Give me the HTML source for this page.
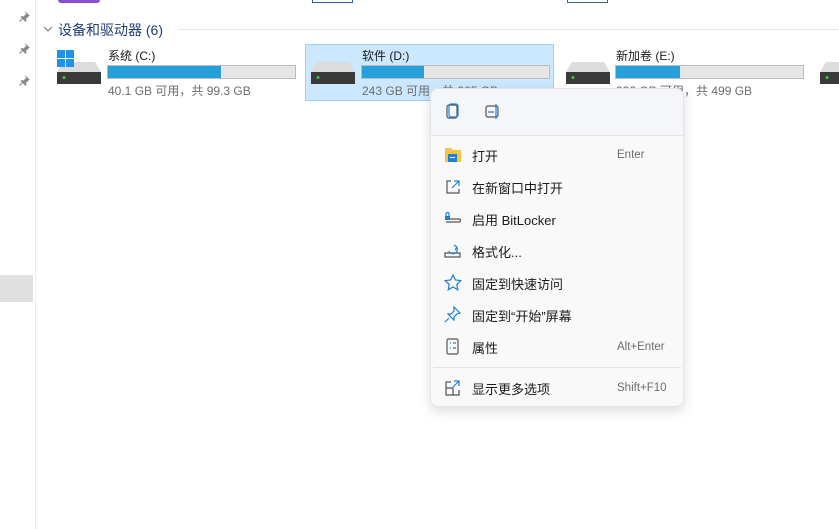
<!DOCTYPE html>
<html><head><meta charset="utf-8"><style>
*{margin:0;padding:0;box-sizing:border-box}
body{width:839px;height:529px;background:#fff;position:relative;overflow:hidden;font-family:"Liberation Sans","Noto Sans CJK SC",sans-serif;color:#1a1a1a}
.a{position:absolute}
.bar{position:absolute;height:14px;width:189px;background:#e6e6e6;border:1px solid #bcbcbc}
.bar i{display:block;height:12px;background:#26a0da}
.t{font-size:12px}
.s{font-size:12px;color:#6d6d6d}
.mi{position:absolute;left:472px;font-size:13px;color:#1a1a1a}
.sc{position:absolute;left:617px;font-size:11.5px;color:#6d6d6d}
</style></head><body>
<div class="a" style="left:35px;top:0;width:1px;height:529px;background:#ececec"></div>
<div class="a" style="left:0;top:275px;width:33px;height:27px;background:#e0e0e0"></div>
<svg class="a" style="left:18px;top:10px" width="14" height="80" fill="#8a8a8a"><g id="p"><path d="M7 1l5 5-1.5.5-2.5 2.5.5 2-1 1-5-5 1-1 2 .5 2.5-2.5z"/><path d="M4.5 8.5L1.5 11.5" stroke="#8a8a8a" stroke-width="1.2"/></g><use href="#p" y="32"/><use href="#p" y="64"/></svg>
<div class="a" style="left:58px;top:0;width:42px;height:3px;background:#8a4fd0;border-radius:0 0 3px 3px"></div>
<div class="a" style="left:312px;top:0;width:41px;height:3px;border:1px solid #2b5f99;border-top:none"></div>
<div class="a" style="left:567px;top:0;width:41px;height:3px;border:1px solid #2e6c78;border-top:none"></div>
<svg class="a" style="left:42px;top:23px" width="12" height="12"><path d="M2 4l4 4 4-4" stroke="#777" fill="none"/></svg>
<div class="a" style="left:58px;top:20px;font-size:14px;color:#1e3f73">设备和驱动器 (6)</div>
<div class="a" style="left:178px;top:29px;width:661px;height:1px;background:#e5e5e5"></div>
<div class="a" style="left:305px;top:44px;width:249px;height:57px;background:#cce8ff;border:1px solid #99d1ff"></div>
<svg class="a" style="left:57px;top:61px" width="44" height="24"><path d="M6 1h32l6 10H0z" fill="#dcdcdc"/><rect x="0" y="11" width="44" height="12" fill="#3a3a3a"/><circle cx="7" cy="16.5" r="1.5" fill="#3c3"/></svg>
<svg class="a" style="left:57px;top:50px" width="18" height="18"><rect x="0" y="0" width="8" height="8" fill="#1f93e8"/><rect x="9" y="0" width="8" height="8" fill="#1f93e8"/><rect x="0" y="9" width="8" height="8" fill="#1f93e8"/><rect x="9" y="9" width="8" height="8" fill="#1f93e8"/></svg>
<svg class="a" style="left:311px;top:61px" width="44" height="24"><path d="M6 1h32l6 10H0z" fill="#dcdcdc"/><rect x="0" y="11" width="44" height="12" fill="#3a3a3a"/><circle cx="7" cy="16.5" r="1.5" fill="#3c3"/></svg>
<svg class="a" style="left:566px;top:61px" width="44" height="24"><path d="M6 1h32l6 10H0z" fill="#dcdcdc"/><rect x="0" y="11" width="44" height="12" fill="#3a3a3a"/><circle cx="7" cy="16.5" r="1.5" fill="#3c3"/></svg>
<svg class="a" style="left:820px;top:61px" width="44" height="24"><path d="M6 1h32l6 10H0z" fill="#dcdcdc"/><rect x="0" y="11" width="44" height="12" fill="#3a3a3a"/><circle cx="7" cy="16.5" r="1.5" fill="#3c3"/></svg>
<div class="a t" style="left:108px;top:47px">系统 (C:)</div>
<div class="bar" style="left:107px;top:65px"><i style="width:113px"></i></div>
<div class="a s" style="left:108px;top:82px">40.1 GB 可用，共 99.3 GB</div>
<div class="a t" style="left:362px;top:47px">软件 (D:)</div>
<div class="bar" style="left:361px;top:65px"><i style="width:62px"></i></div>
<div class="a s" style="left:362px;top:82px">243 GB 可用，共 365 GB</div>
<div class="a t" style="left:616px;top:47px">新加卷 (E:)</div>
<div class="bar" style="left:615px;top:65px"><i style="width:64px"></i></div>
<div class="a s" style="left:616px;top:82px">232 GB 可用，共 499 GB</div>
<div class="a" style="left:430px;top:88px;width:254px;height:319px;background:#f9f9f9;border:1px solid #e4e4e4;border-radius:8px;box-shadow:0 4px 12px rgba(0,0,0,.14)"></div>
<div class="a" style="left:431px;top:89px;width:252px;height:46px;background:#f4f6f9;border-radius:8px 8px 0 0"></div>
<div class="a" style="left:431px;top:135px;width:252px;height:1px;background:#e3e3e3"></div>
<div class="a" style="left:433px;top:367px;width:248px;height:1px;background:#e3e3e3"></div>
<svg class="a" style="left:444px;top:102px" width="60" height="20" fill="none" stroke-width="1.2"><rect x="3" y="3" width="10" height="13" rx="2" stroke="#555"/><rect x="5" y="2" width="9" height="13" rx="2" stroke="#1f7ed8"/><rect x="42" y="4" width="12" height="11" rx="2" stroke="#555"/><path d="M44 10h6M52 2v15" stroke="#1f7ed8"/></svg>
<svg class="a" style="left:444px;top:146px" width="18" height="250" fill="none" stroke-width="1.2">
<path d="M1 2h6l2 2h8v12H1z" fill="#f6c445" stroke="none"/><rect x="4" y="8" width="9" height="8" fill="#1f7ed8"/><rect x="6" y="11" width="5" height="1" fill="#fff"/>
<g transform="translate(0,32)"><path d="M7 3H3v12h12v-4" stroke="#555"/><path d="M10 3h5v5M15 3l-7 7" stroke="#1f7ed8"/></g>
<g transform="translate(0,64)"><rect x="1" y="6" width="5" height="4" fill="#1f7ed8" stroke="none"/><path d="M2 6V4a1.5 1.5 0 013 0v2" stroke="#1f7ed8"/><path d="M6 9h9a1.5 1.5 0 010 3H2" stroke="#555"/></g>
<g transform="translate(0,96)"><path d="M1 11h15v4H1z" stroke="#555"/><path d="M5 9a4 4 0 108-3M10 3l3 2-2 3" stroke="#1f7ed8"/></g>
<g transform="translate(0,128)"><path d="M9 1l2.4 5 5.4.6-4 3.8 1 5.4L9 13l-4.8 2.8 1-5.4-4-3.8 5.4-.6z" stroke="#1f7ed8"/></g>
<g transform="translate(0,160)"><path d="M10 1l6 6-3 1-3 3 0 3-6-6 3 0 3-3zM5 12l-4 4" stroke="#1f7ed8"/></g>
<g transform="translate(0,192)"><rect x="3" y="1" width="11" height="15" rx="1.5" stroke="#555"/><path d="M6 5h1M6 10h1M9 5h3M9 10h3" stroke="#1f7ed8"/></g>
<g transform="translate(0,233)"><path d="M7 3H2v13h13v-5M2 9h7v7" stroke="#555"/><path d="M10 2h5v5M15 2l-6 6" stroke="#1f7ed8"/></g>
</svg>
<div class="mi" style="top:146px">打开</div><div class="sc" style="top:149px">Enter</div>
<div class="mi" style="top:178px">在新窗口中打开</div>
<div class="mi" style="top:210px">启用 BitLocker</div>
<div class="mi" style="top:242px">格式化...</div>
<div class="mi" style="top:274px">固定到快速访问</div>
<div class="mi" style="top:306px">固定到“开始”屏幕</div>
<div class="mi" style="top:338px">属性</div><div class="sc" style="top:341px">Alt+Enter</div>
<div class="mi" style="top:379px">显示更多选项</div><div class="sc" style="top:382px">Shift+F10</div>
</body></html>
